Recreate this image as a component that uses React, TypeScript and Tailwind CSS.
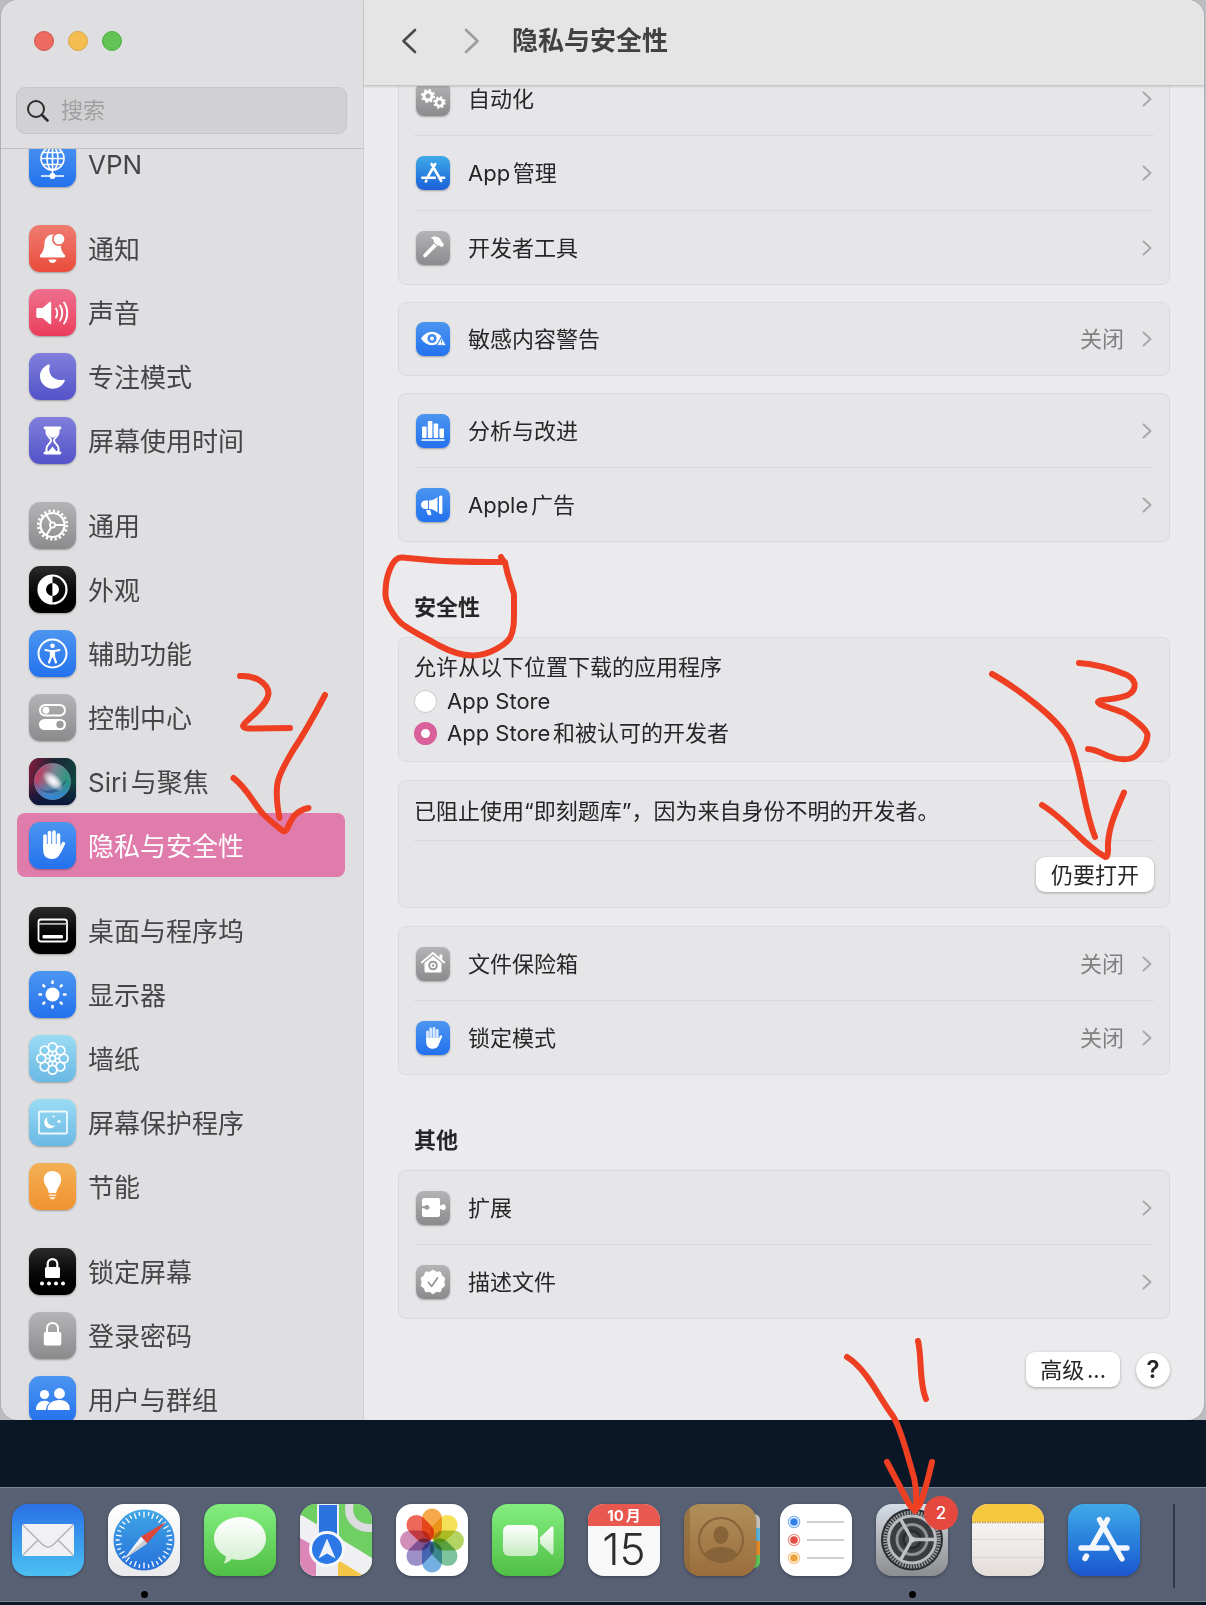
import type { ReactNode } from "react";

/* ---------- sidebar glyphs, drawn on a 47 x 47 tile ---------- */

const HandShape = () => (
  <g fill="none" stroke="#fff" strokeLinecap="round">
    <path d="M16 14v12M20.500 10.500v14M25 10v14M29.500 13v13" strokeWidth="3.600" />
    <path d="M34.500 21.500l-4 8" strokeWidth="3.400" />
    <path
      d="M14.200 22h17v4l3.200-1.500-3.500 7.500c-1.500 3.400-4.500 5-8.200 5-5.500 0-8.500-3.500-8.500-9z"
      fill="#fff"
      stroke="none"
    />
  </g>
);

const GearRing = () => (
  <g fill="none" stroke="#fff">
    <circle cx="23.500" cy="23" r="12" strokeWidth="2.200" />
    <circle cx="23.500" cy="23" r="14.300" strokeWidth="2.600" strokeDasharray="2.200 2.292" />
    <circle cx="23.500" cy="23" r="2.600" strokeWidth="1.800" />
    <path d="M26 23h9.500M22.200 20.800l-5-8.400M22.200 25.200l-5 8.400" strokeWidth="2" />
  </g>
);

const petals = [0, 45, 90, 135, 180, 225, 270, 315];

const glyphs: Record<string, ReactNode> = {
  vpn: (
    <g fill="none" stroke="#fff" strokeWidth="1.600">
      <circle cx="23.500" cy="18.500" r="11.500" />
      <ellipse cx="23.500" cy="18.500" rx="5.500" ry="11.500" />
      <path d="M12 18.500h23M23.500 7v28M14 12.500h19M14 24.500h19M12 36h23" />
      <circle cx="23.500" cy="36" r="3" fill="#fff" stroke="none" />
    </g>
  ),
  bell: (
    <g fill="#fff">
      <path d="M23.500 9.500c-5 0-7.700 4-8 9-.4 6-1.600 8.500-4.300 11.500-.9 1-.4 2.500 1 2.500h22.600c1.400 0 1.900-1.500 1-2.500-2.700-3-3.900-5.500-4.300-11.500-.3-5-3-9-8-9z" />
      <path d="M19.500 34.500h8c-.6 2.400-2 3.500-4 3.500s-3.400-1.100-4-3.500z" />
      <circle cx="30" cy="14" r="6.200" stroke="#ec6f64" strokeWidth="1.800" />
    </g>
  ),
  sound: (
    <g fill="none" stroke="#fff" strokeWidth="2" strokeLinecap="round">
      <path
        d="M9 19h4.500l7-6c.8-.7 1.700-.3 1.700.8v20.400c0 1.100-.9 1.500-1.700.8l-7-6H9c-1 0-1.700-.7-1.700-1.700v-6.600c0-1 .7-1.700 1.700-1.700z"
        fill="#fff"
        stroke="none"
      />
      <path d="M27 19.500c1.600 2.500 1.600 6.500 0 9M31 16.500c3 4 3 11 0 15M35 13.500c4.200 5.500 4.200 15.500 0 21" />
    </g>
  ),
  moon: (
    <path
      d="M19.500 11.600c.8-.4 1.600.3 1.300 1.100-2.600 8.300 4.200 16 13.800 14 .9-.2 1.600.6 1.200 1.400-2 4.500-6.600 7.600-11.800 7.600-7.200 0-13-5.700-13-12.700 0-4.900 3.400-9.500 8.500-11.400z"
      fill="#fff"
    />
  ),
  hourglass: (
    <g fill="none" stroke="#fff" strokeWidth="2" strokeLinejoin="round">
      <path d="M16 11h15M16 36h15" strokeWidth="2.800" strokeLinecap="round" />
      <path d="M17.500 12v3.500c0 4 4.500 5 4.500 8s-4.500 4-4.500 8V35h12v-3.500c0-4-4.500-5-4.500-8s4.500-4 4.500-8V12z" />
      <path d="M17.500 12h12v4l-4.500 4.500h-3L17.500 16zM19 35l4.500-5.500L28 35z" fill="#fff" stroke="none" />
    </g>
  ),
  gear: <GearRing />,
  appearance: (
    <g>
      <circle cx="23.500" cy="23.500" r="14" fill="none" stroke="#fff" strokeWidth="2.200" />
      <path d="M23.500 9.500a14 14 0 0 0 0 28z" fill="#fff" />
      <path d="M23.500 17a6.500 6.500 0 0 0 0 13z" fill="#000" />
      <path d="M23.500 17a6.500 6.500 0 0 1 0 13z" fill="#fff" />
    </g>
  ),
  accessibility: (
    <g fill="none" stroke="#fff" strokeLinecap="round" strokeLinejoin="round">
      <circle cx="23.500" cy="23.500" r="14" strokeWidth="2" />
      <circle cx="23.500" cy="15.800" r="2.300" fill="#fff" stroke="none" />
      <path d="M16.500 20l5 1h4l5-1" strokeWidth="2" />
      <path d="M22 21h3v6l2 5.500M22 21v6l-2 5.500" strokeWidth="2.200" />
      <path d="M22 21h3v6h-3z" fill="#fff" strokeWidth="1" />
    </g>
  ),
  controls: (
    <g>
      <rect x="11" y="11" width="25" height="10.500" rx="5.250" fill="none" stroke="#fff" strokeWidth="2" />
      <circle cx="17" cy="16.250" r="3.400" fill="#fff" />
      <rect x="10" y="25" width="27" height="11" rx="5.500" fill="#fff" />
      <circle cx="31" cy="30.500" r="3.700" fill="#9b9b9d" />
    </g>
  ),
  siri: (
    <g>
      <defs>
        <linearGradient id="siriBg" x1="0" y1="0" x2="1" y2=".3">
          <stop offset="0" stopColor="#8a1a3e" />
          <stop offset=".5" stopColor="#1d2433" />
          <stop offset="1" stopColor="#0f4440" />
        </linearGradient>
        <linearGradient id="siriLow" x1="0" y1="0" x2="0" y2="1">
          <stop offset=".5" stopColor="#101430" stopOpacity="0" />
          <stop offset="1" stopColor="#0a1540" />
        </linearGradient>
        <linearGradient id="siriOrb" x1="0" y1=".2" x2="1" y2=".5">
          <stop offset="0" stopColor="#ee2f62" />
          <stop offset=".5" stopColor="#8f9aa8" />
          <stop offset="1" stopColor="#1fb08c" />
        </linearGradient>
        <linearGradient id="siriBlue" x1="0" y1="0" x2="0" y2="1">
          <stop offset=".5" stopColor="#3c7fd0" stopOpacity="0" />
          <stop offset="1" stopColor="#2f86dc" />
        </linearGradient>
        <radialGradient id="siriCore">
          <stop offset="0" stopColor="#fff" />
          <stop offset=".4" stopColor="#f3eef8" stopOpacity=".85" />
          <stop offset="1" stopColor="#fff" stopOpacity="0" />
        </radialGradient>
      </defs>
      <rect width="47" height="47" fill="url(#siriBg)" />
      <rect width="47" height="47" fill="url(#siriLow)" />
      <circle cx="23.500" cy="23.500" r="18" fill="url(#siriOrb)" fillOpacity=".8" stroke="#8f8fb8" strokeOpacity=".6" />
      <circle cx="23.500" cy="23.500" r="18" fill="url(#siriBlue)" />
      <path d="M9 29c6 6 17 5 29-8-5 15-20 19-29 8z" fill="#1f3f78" fillOpacity=".5" />
      <ellipse cx="24" cy="23" rx="13" ry="7" fill="url(#siriCore)" transform="rotate(42 24 23)" />
    </g>
  ),
  hand: <HandShape />,
  dock: (
    <g fill="none" stroke="#fff" strokeWidth="1.800">
      <rect x="9.500" y="12.500" width="28.500" height="22" rx="2.500" />
      <path d="M10 16.800h27.500" stroke="#bbb" />
      <rect x="13.500" y="28" width="20.500" height="3.500" rx="1" fill="#fff" stroke="none" />
    </g>
  ),
  sun: (
    <g stroke="#fff" strokeWidth="2.600" strokeLinecap="round">
      <circle cx="23.500" cy="23.500" r="7" fill="#fff" stroke="none" />
      <path d="M23.500 10.500v1.500M23.500 35v1.500M10.500 23.500H12M35 23.500h1.500M14.300 14.300l1 1M31.700 31.700l1 1M14.300 32.700l1-1M31.700 15.300l1-1" />
    </g>
  ),
  flower: (
    <g fill="none" stroke="#fff" strokeWidth="1.700">
      {petals.map((a) => (
        <circle key={a} cx="23.500" cy="12.300" r="4.400" transform={`rotate(${a} 23.500 23.500)`} />
      ))}
      {petals.map((a) => (
        <path key={a} d="M23.500 20.500v-3.500" transform={`rotate(${a} 23.500 23.500)`} />
      ))}
      <circle cx="23.500" cy="23.500" r="3" />
    </g>
  ),
  saver: (
    <g>
      <rect x="10" y="12.500" width="28" height="22" rx="1" fill="none" stroke="#fff" strokeOpacity=".85" strokeWidth="1.800" />
      <path d="M18.500 18c-2 5 2 9.500 7.500 8.500-1 2-3 2.700-5 2.700-3.200 0-5.700-2.400-5.700-5.500 0-2.500 1.200-4.500 3.200-5.700z" fill="#fff" />
      <circle cx="24.500" cy="17.500" r="1.100" fill="#fff" />
      <circle cx="30" cy="22.500" r="1.700" fill="#fff" fillOpacity=".8" />
    </g>
  ),
  bulb: (
    <g fill="#fff">
      <path d="M23.500 8c-5 0-8.700 3.500-8.700 8.500 0 5.500 4 7.500 4.700 12.500.1.600.5 1 1 1h6c.5 0 .9-.4 1-1 .7-5 4.700-7 4.700-12.500 0-5-3.700-8.500-8.700-8.500z" />
      <path d="M19.800 31.500h7.400v1.600h-7.400zM20.500 34h6c-.4 1.600-1.400 2.400-3 2.400s-2.600-.8-3-2.400z" fillOpacity=".75" />
    </g>
  ),
  lockDots: (
    <g fill="#fff">
      <path d="M18.700 20v-4c0-6.500 9.600-6.500 9.600 0v4" fill="none" stroke="#fff" strokeWidth="2.200" />
      <rect x="16" y="19" width="15" height="11" rx="1.500" />
      {[13, 20, 27, 34].map((x) => (
        <circle key={x} cx={x} cy="35.500" r="2" />
      ))}
    </g>
  ),
  lock: (
    <g fill="#fff">
      <path d="M18 21v-4.500c0-7.500 11-7.500 11 0V21" fill="none" stroke="#fff" strokeWidth="2" />
      <rect x="14.800" y="20" width="17.500" height="13.500" rx="1.800" />
    </g>
  ),
  users: (
    <g fill="#fff">
      <circle cx="15.500" cy="18.500" r="4.600" />
      <circle cx="30.500" cy="17.500" r="5.400" />
      <path d="M7 33c0-5 4-8.300 8.500-8.300 2 0 3.700.6 5 1.700-2 1.700-3.300 4-3.500 7.600H8.200c-.7 0-1.200-.4-1.200-1z" />
      <path d="M19.500 34c-.6 0-1-.4-1-1 0-5.200 5-9 12-9s10.300 4 10.300 9c0 .6-.4 1-1 1z" />
    </g>
  ),
};

type SideEntry = { label: string; icon: string; tile: string; selected?: boolean };

const BLUE = "bg-linear-to-b from-[#4c95f0] to-[#2371ee]";
const GREY = "bg-linear-to-b from-[#b4b4b6] to-[#8b8b8d]";
const INDIGO = "bg-linear-to-b from-[#807fdc] to-[#5452c8]";
const BLACK = "bg-linear-to-b from-[#2b2b2b] to-[#000000]";
const SKY = "bg-linear-to-b from-[#9bdcf4] to-[#69b8e4]";

const sideGroups: SideEntry[][] = [
  [{ label: "VPN", icon: "vpn", tile: BLUE }],
  [
    { label: "通知", icon: "bell", tile: "bg-linear-to-b from-[#ee7b70] to-[#ea4a3a]" },
    { label: "声音", icon: "sound", tile: "bg-linear-to-b from-[#ee6f8d] to-[#ea3c5c]" },
    { label: "专注模式", icon: "moon", tile: INDIGO },
    { label: "屏幕使用时间", icon: "hourglass", tile: INDIGO },
  ],
  [
    { label: "通用", icon: "gear", tile: GREY },
    { label: "外观", icon: "appearance", tile: BLACK },
    { label: "辅助功能", icon: "accessibility", tile: BLUE },
    { label: "控制中心", icon: "controls", tile: GREY },
    { label: "Siri与聚焦", icon: "siri", tile: BLACK },
    { label: "隐私与安全性", icon: "hand", tile: BLUE, selected: true },
  ],
  [
    { label: "桌面与程序坞", icon: "dock", tile: BLACK },
    { label: "显示器", icon: "sun", tile: BLUE },
    { label: "墙纸", icon: "flower", tile: SKY },
    { label: "屏幕保护程序", icon: "saver", tile: SKY },
    { label: "节能", icon: "bulb", tile: "bg-linear-to-b from-[#f3b054] to-[#f0922e]" },
  ],
  [
    { label: "锁定屏幕", icon: "lockDots", tile: BLACK },
    { label: "登录密码", icon: "lock", tile: GREY },
    { label: "用户与群组", icon: "users", tile: BLUE },
  ],
];

function SideItem({ label, icon, tile, selected }: SideEntry) {
  return (
    <li>
      <a
        href="#"
        aria-current={selected ? "page" : undefined}
        className={`flex h-16 items-center gap-3 rounded-lg pl-3 ${selected ? "bg-[#e07cab] text-white" : "text-[#454547]"}`}
      >
        <span className={`size-[47px] shrink-0 overflow-hidden rounded-[11px] shadow-[0_1px_2px_rgba(0,0,0,0.3)] ${tile}`}>
          <svg viewBox="0 0 47 47" className="size-full" aria-hidden="true">
            {glyphs[icon]}
          </svg>
        </span>
        <span className="pt-[3px] text-[26px] leading-7 whitespace-nowrap">{label}</span>
      </a>
    </li>
  );
}

function Sidebar() {
  return (
    <aside className="flex w-[363px] shrink-0 flex-col border-r border-[#d0d0d2] bg-[#dfdfe1]">
      <div className="border-b border-[#c2c2c4] pt-[31px] pr-4 pb-[14px] pl-[15px]">
        <div className="flex gap-[14px] pl-[18px]">
          <button aria-label="关闭窗口" className="size-5 rounded-full border border-[#c95a52] bg-[#ec6a5f]" />
          <button aria-label="最小化" className="size-5 rounded-full border border-[#d9a548] bg-[#f4bd50]" />
          <button aria-label="缩放" className="size-5 rounded-full border border-[#4fae45] bg-[#61c455]" />
        </div>
        <label className="mt-9 flex h-[47px] items-center gap-3 rounded-[9px] border border-[#c6c6c8] bg-[#d1d1d3] pl-[10px]">
          <svg viewBox="0 0 22 22" className="size-[22px] shrink-0" fill="none" stroke="#2d2d2f" strokeWidth="2" aria-hidden="true">
            <circle cx="9" cy="9" r="8" />
            <path d="M15 15l5.500 5.500" strokeWidth="2.600" strokeLinecap="round" />
          </svg>
          <input
            type="text"
            aria-label="搜索"
            placeholder="搜索"
            className="min-w-0 flex-1 bg-transparent text-[22px] text-[#333] outline-none placeholder:text-[#a0a0a2]"
          />
        </label>
      </div>
      <nav className="min-h-0 flex-1 overflow-y-auto pr-[18px] pl-4 [scrollbar-width:none]">
        <div className="-mt-[18px] flex flex-col gap-[21px]">
          {sideGroups.map((g) => (
            <ul key={g[0].label}>
              {g.map((e) => (
                <SideItem key={e.label} {...e} />
              ))}
            </ul>
          ))}
        </div>
      </nav>
    </aside>
  );
}

/* ---------- row glyphs, drawn on a 34 x 34 tile ---------- */

const AppStoreA = () => (
  <g stroke="#fff" strokeLinecap="round" fill="none">
    <path d="M19.200 8L12.300 20M15.600 8l9.600 17M6.300 21.700h12.500M23.800 21.700h4.400M9.800 25.500l.6-1" strokeWidth="2.600" />
  </g>
);

const rowGlyphs: Record<string, ReactNode> = {
  gears: (
    <g fill="none" stroke="#fff">
      <circle cx="12" cy="14" r="4" strokeWidth="3" />
      <circle cx="12" cy="14" r="6" strokeWidth="2" strokeDasharray="2.400 2.312" />
      <circle cx="23.500" cy="20.500" r="3.500" strokeWidth="2.600" />
      <circle cx="23.500" cy="20.500" r="5.300" strokeWidth="1.800" strokeDasharray="2.100 2.063" />
    </g>
  ),
  appstore: <AppStoreA />,
  hammer: (
    <g fill="#fff">
      <path d="M7.500 23.500L18 12.500l2.800 2.800L10 26c-1.600 1.400-3.800-.9-2.500-2.500z" />
      <path d="M15 6.800c4-2.300 7.500-1 9.500 1.500l1 2.200 2.200 2.500c.5.500.4 1-.1 1.400l-1.400 1.400c-.4.400-1 .4-1.400 0l-1.600-1.300-1.600.3-3.800-3.600c.6-2-.4-3.300-2.800-3.900z" />
    </g>
  ),
  eye: (
    <g>
      <path d="M5 16.500c3-4.500 6.700-6.800 11-6.800s8 2.300 11 6.800c-3 4.500-6.700 6.800-11 6.800s-8-2.300-11-6.800z" fill="#fff" />
      <circle cx="16" cy="16.500" r="4.600" fill="#3f8bf0" />
      <circle cx="16" cy="16.500" r="1.900" fill="#fff" />
      <path d="M25.500 15l5 8.700h-10z" fill="#fff" stroke="#3f8bf0" strokeWidth="1.200" strokeLinejoin="round" />
      <path d="M25.500 18v2.800M25.500 21.800v.8" stroke="#3f8bf0" strokeWidth="1" />
    </g>
  ),
  bars: (
    <g fill="#fff">
      <rect x="6" y="12.500" width="4.600" height="11.500" rx="1" />
      <rect x="11.800" y="7" width="4.600" height="17" rx="1" />
      <rect x="17.600" y="9.500" width="4.600" height="14.500" rx="1" />
      <rect x="23.400" y="14.500" width="4.600" height="9.500" rx="1" />
      <rect x="5.500" y="25.300" width="23" height="1.500" />
    </g>
  ),
  megaphone: (
    <g fill="#fff">
      <path d="M9.500 12.500H12V21H9.500c-2.500 0-4.500-1.800-4.500-4.200s2-4.300 4.500-4.300zM13 12.500c3.500-.2 6.500-1.500 8.500-3.500v15.500c-2-2-5-3.300-8.500-3.500z" />
      <rect x="23" y="7.500" width="3.400" height="18.500" rx="1.500" />
      <path d="M10 22h4l1.300 3.500c.4 1-.3 1.800-1.200 1.800h-1c-.8 0-1.300-.4-1.600-1.200z" />
    </g>
  ),
  house: (
    <g>
      <path d="M5.800 15.500L17 6l11.200 9.500" fill="none" stroke="#fff" strokeWidth="1.800" strokeLinecap="round" />
      <path d="M23.500 7.500h2.800V13l-2.800-2.400z" fill="#fff" />
      <path d="M8.500 16L17 9l8.500 7v8c0 1-.6 1.600-1.600 1.600H10.100c-1 0-1.600-.6-1.600-1.600z" fill="#fff" />
      <circle cx="17" cy="18.500" r="3.800" fill="none" stroke="#9a9a9c" strokeWidth="2" />
      <circle cx="17" cy="18.500" r="1.200" fill="#9a9a9c" />
    </g>
  ),
  hand: (
    <g fill="none" stroke="#fff" strokeLinecap="round">
      <path d="M11.500 11v8M14.700 8v10M18 7.500v10M21.200 9.500v10" strokeWidth="2.800" strokeOpacity=".8" />
      <path d="M25 15.500l-3 6" strokeWidth="2.400" />
      <path d="M10.200 17h12.400v2.500l2-1-2 5.500c-1.100 2.600-3 3.800-5.700 3.800-4.200 0-6.700-2.600-6.700-6.800z" fill="#fff" stroke="none" />
    </g>
  ),
  puzzle: (
    <g>
      <path d="M8 7h14c1.200 0 2 .8 2 2v5.500h1.200c.6-.8 1.300-1.200 2.100-1.200 1.500 0 2.500 1.200 2.500 2.900s-1 2.900-2.500 2.900c-.8 0-1.500-.4-2.100-1.200H24V24c0 1.200-.8 2-2 2H8c-1.200 0-2-.8-2-2V9c0-1.200.8-2 2-2z" fill="#fff" />
      <path d="M5.500 15.300h2.800c2-2.500 5.200-1.300 5.200 1s-3.200 3.500-5.200 1H5.500z" fill="#9c9c9e" />
    </g>
  ),
  seal: (
    <g>
      <path
        d="M17 5l3.500 2.300 4.200-.3 1.500 3.900 3.300 2.600-1.100 4 1.100 4-3.300 2.500-1.500 3.900-4.200-.3L17 30l-3.500-2.400-4.200.3-1.500-3.900-3.300-2.500 1.100-4-1.100-4 3.300-2.600L9.300 7l4.200.3z"
        fill="#fff"
        stroke="#fff"
        strokeLinejoin="round"
        transform="translate(.8 .3) scale(.95)"
      />
      <path d="M12.500 17.500l3.200 3.800 5.800-8.300" fill="none" stroke="#98989a" strokeWidth="1.800" strokeLinecap="round" strokeLinejoin="round" />
    </g>
  ),
};

const Chevron = () => (
  <svg viewBox="0 0 10 16" className="h-4 w-[10px] shrink-0" fill="none" stroke="#a9a9ab" strokeWidth="2" strokeLinecap="round" strokeLinejoin="round" aria-hidden="true">
    <path d="M1.500 1.500L8.500 8l-7 6.500" />
  </svg>
);

type RowData = { label: string; icon: string; tile: string; value?: string };

function Row({ label, icon, tile, value }: RowData) {
  return (
    <li className="h-[75px] border-t border-[#d9d9db] first:h-[73px] first:border-t-0 last:h-[74px] only:h-[72px]">
      <a href="#" className="flex h-full items-center gap-[18px] px-[2px]">
        <span className={`size-[34px] shrink-0 overflow-hidden rounded-lg shadow-[0_1px_2px_rgba(0,0,0,0.3)] ${tile}`}>
          <svg viewBox="0 0 34 34" className="size-full" aria-hidden="true">
            {rowGlyphs[icon]}
          </svg>
        </span>
        <span className="flex-1">{label}</span>
        {value && <span className="text-[#808082]">{value}</span>}
        <Chevron />
      </a>
    </li>
  );
}

function Card({ children }: { children: ReactNode }) {
  return <div className="rounded-lg border border-[#dadadc] bg-[#e6e6e8] px-[15px]">{children}</div>;
}

function RowCard({ rows }: { rows: RowData[] }) {
  return (
    <Card>
      <ul>
        {rows.map((r) => (
          <Row key={r.label} {...r} />
        ))}
      </ul>
    </Card>
  );
}

function Heading({ children }: { children: ReactNode }) {
  return <h2 className="h-[95px] px-4 pt-[50px] leading-[30px] font-bold">{children}</h2>;
}

function Content() {
  return (
    <main className="flex min-w-0 flex-1 flex-col bg-[#ebebed]">
      <header className="relative flex h-[86px] shrink-0 items-center border-b border-[#c6c6c8] bg-[#e5e5e6] pb-1 pl-[37px] shadow-[0_1px_2px_rgba(0,0,0,0.12)]">
        <button aria-label="后退">
          <svg viewBox="0 0 16 26" className="h-[26px] w-4" fill="none" stroke="#4a4a4c" strokeWidth="2.600" strokeLinecap="round" strokeLinejoin="round">
            <path d="M14 2L2.500 13 14 24" />
          </svg>
        </button>
        <button aria-label="前进" className="ml-[47px]">
          <svg viewBox="0 0 16 26" className="h-[26px] w-4" fill="none" stroke="#9d9d9f" strokeWidth="2.600" strokeLinecap="round" strokeLinejoin="round">
            <path d="M2 2l11.500 11L2 24" />
          </svg>
        </button>
        <h1 className="ml-8 text-[26px] leading-8 font-bold text-[#414143]">隐私与安全性</h1>
      </header>
      <div className="min-h-0 flex-1 overflow-y-auto px-[34px] text-[22px] leading-8 text-[#262628] [scrollbar-width:none]">
        <div className="-mt-[25px] flex flex-col gap-[17px]">
          <RowCard
            rows={[
              { label: "自动化", icon: "gears", tile: GREY },
              { label: "App管理", icon: "appstore", tile: "bg-linear-to-b from-[#3fa9e6] to-[#1f5fd8]" },
              { label: "开发者工具", icon: "hammer", tile: GREY },
            ]}
          />
          <RowCard rows={[{ label: "敏感内容警告", icon: "eye", tile: BLUE, value: "关闭" }]} />
          <RowCard
            rows={[
              { label: "分析与改进", icon: "bars", tile: BLUE },
              { label: "Apple广告", icon: "megaphone", tile: BLUE },
            ]}
          />
        </div>

        <Heading>安全性</Heading>
        <div className="flex flex-col gap-[18px]">
          <Card>
            <fieldset className="pt-[13px] pb-3">
              <legend className="float-left w-full">允许从以下位置下载的应用程序</legend>
              <label className="clear-both flex items-center gap-[10px] pt-[2px]">
                <input
                  type="radio"
                  name="source"
                  className="size-[23px] appearance-none rounded-full border border-[#c9c9cb] bg-white checked:border-[7px] checked:border-[#d9609a]"
                />
                App Store
              </label>
              <label className="flex items-center gap-[10px]">
                <input
                  type="radio"
                  name="source"
                  defaultChecked
                  className="size-[23px] appearance-none rounded-full border border-[#c9c9cb] bg-white checked:border-[7px] checked:border-[#d9609a]"
                />
                App Store和被认可的开发者
              </label>
            </fieldset>
          </Card>
          <Card>
            <p className="border-b border-[#d9d9db] pt-[14px] pb-[13px]">已阻止使用“即刻题库”，因为来自身份不明的开发者。</p>
            <div className="flex justify-end pt-4 pb-[15px]">
              <button className="h-[35px] rounded-[9px] bg-white px-[15px] shadow-[0_1px_3px_rgba(0,0,0,0.3)]">仍要打开</button>
            </div>
          </Card>
          <RowCard
            rows={[
              { label: "文件保险箱", icon: "house", tile: GREY, value: "关闭" },
              { label: "锁定模式", icon: "hand", tile: BLUE, value: "关闭" },
            ]}
          />
        </div>

        <Heading>其他</Heading>
        <RowCard
          rows={[
            { label: "扩展", icon: "puzzle", tile: GREY },
            { label: "描述文件", icon: "seal", tile: GREY },
          ]}
        />
        <div className="flex items-center justify-end gap-4 pt-[33px] pb-8">
          <button className="h-[35px] rounded-[9px] bg-white px-[14px] shadow-[0_1px_3px_rgba(0,0,0,0.3)]">高级...</button>
          <button aria-label="帮助" className="size-[34px] rounded-full bg-white text-[24px] font-semibold shadow-[0_1px_3px_rgba(0,0,0,0.3)]">
            ?
          </button>
        </div>
      </div>
    </main>
  );
}

/* ---------- dock icons, drawn on a 72 x 72 tile ---------- */

const ticks = Array.from({ length: 36 }, (_, i) => i * 10);

const Mail = () => (
  <>
    <path d="M12 20h48c1 0 2 1 2 2v28c0 1-1 2-2 2H12c-1 0-2-1-2-2V22c0-1 1-2 2-2z" fill="#f1f1f3" />
    <path d="M11 21l19 19c4 4 8 4 12 0l19-19M11 51l15-15M61 51L46 36" fill="none" stroke="#b1b3b8" strokeWidth="1.500" />
  </>
);

const Safari = () => (
  <>
    <defs>
      <linearGradient id="safariDial" x1="0" y1="0" x2="0" y2="1">
        <stop offset="0" stopColor="#3fa6e4" />
        <stop offset="1" stopColor="#2770dc" />
      </linearGradient>
    </defs>
    <circle cx="36" cy="36" r="30.500" fill="url(#safariDial)" />
    {ticks.map((a) => (
      <path key={a} d={a % 20 ? "M36 7.500v4" : "M36 7.500v6"} stroke="#fff" strokeWidth="1.300" transform={`rotate(${a} 36 36)`} />
    ))}
    <path d="M58 18L33 32.500l6 7z" fill="#e0453a" />
    <path d="M16 55l17-22.500 6 7z" fill="#f3f3f5" />
    <path d="M16 55l23-15.500-3-3.500z" fill="#c9ccd2" />
  </>
);

const Messages = () => (
  <>
    <defs>
      <linearGradient id="bubble" x1="0" y1="0" x2="0" y2="1">
        <stop offset="0" stopColor="#ffffff" />
        <stop offset="1" stopColor="#d3efcf" />
      </linearGradient>
    </defs>
    <path d="M36 13c14.500 0 26 9.500 26 21.500S50.500 56 36 56c-3 0-5.800-.4-8.400-1.100-2 2.300-5 4.300-8.300 4.600 1.600-1.800 2.700-4.500 2.600-7.100C14.500 48.500 10 42 10 34.500 10 22.500 21.500 13 36 13z" fill="url(#bubble)" />
  </>
);

const Maps = () => (
  <>
    <rect width="72" height="72" fill="#6fcf63" />
    <path d="M0 10l72 44v18H0z" fill="#f0eff1" />
    <path d="M0 34l16 9v29H0z" fill="#dc86b8" />
    <path d="M0 10l17 10V0H0z" fill="#6fcf63" />
    <path d="M38 56l26 16H38z" fill="#f2c546" />
    <path d="M17 40h21v32H17z" fill="#ececef" />
    <circle cx="68" cy="5" r="19" fill="none" stroke="#dcdbe0" strokeWidth="8" />
    <path d="M18 0h20v32H18z" fill="#2b74e0" stroke="#e9eefa" strokeWidth="2" />
    <circle cx="27" cy="45" r="16.500" fill="#2b78e6" stroke="#f6f8fc" strokeWidth="3" />
    <path d="M27 34.500l8.500 20L27 49.500l-8.500 5z" fill="#eef3fb" />
  </>
);

const petalColors = ["#f39a2b", "#f2dc3a", "#a6cd48", "#67b98c", "#5aa2dc", "#8b7cc0", "#c77bab", "#ea4d3c"];

const Photos = () => (
  <g className="mix-blend-multiply">
    {petalColors.map((c, i) => (
      <rect key={c} x="26" y="4.500" width="20" height="31" rx="10" fill={c} fillOpacity=".85" className="mix-blend-multiply" transform={`rotate(${i * 45} 36 36.500)`} />
    ))}
  </g>
);

const FaceTime = () => (
  <>
    <defs>
      <linearGradient id="cam" x1="0" y1="0" x2="0" y2="1">
        <stop offset="0" stopColor="#ffffff" />
        <stop offset="1" stopColor="#c4ebc0" />
      </linearGradient>
    </defs>
    <rect x="11" y="21" width="35" height="31" rx="6" fill="url(#cam)" />
    <path d="M48 33.500l11-10.500c1.200-1 2.500-.5 2.500 1v25c0 1.500-1.300 2-2.500 1l-11-10.500z" fill="url(#cam)" />
  </>
);

const Contacts = () => (
  <>
    <path d="M0 0h6v72H0z" fill="#8c673b" fillOpacity=".6" />
    <circle cx="37" cy="36" r="22" fill="none" stroke="#866338" strokeWidth="2" />
    <ellipse cx="37" cy="31" rx="7.500" ry="9" fill="#866338" />
    <path d="M20.500 50c3-4.500 9-7 16.500-7s13.500 2.500 16.500 7c-4 5-10 8-16.500 8s-12.500-3-16.500-8z" fill="#866338" />
  </>
);

const Reminders = () => (
  <>
    {[
      { y: 18, c: "#2f80ea" },
      { y: 36, c: "#e34c42" },
      { y: 54, c: "#f0a23a" },
    ].map(({ y, c }) => (
      <g key={y}>
        <circle cx="14" cy={y} r="5.600" fill="none" stroke={c} strokeOpacity=".6" strokeWidth="1.300" />
        <circle cx="14" cy={y} r="3.800" fill={c} />
        <path d={`M27 ${y}h37`} stroke="#cfcfd1" strokeWidth="1.800" />
      </g>
    ))}
  </>
);

const Settings = () => (
  <>
    <circle cx="36" cy="35.500" r="31" fill="#2c2d30" />
    <circle cx="36" cy="35.500" r="27" fill="none" stroke="#9ea0a3" strokeWidth="4" strokeDasharray="1.600 1.227" />
    <circle cx="36" cy="35.500" r="23.500" fill="#3b3c40" stroke="#b8babd" strokeWidth="3" />
    <circle cx="36" cy="35.500" r="15" fill="none" stroke="#8f9194" strokeWidth="3" />
    <circle cx="36" cy="35.500" r="8.500" fill="#4b4c50" stroke="#2a2b2e" strokeWidth="3" />
    <path d="M36 35.500h24M36 35.500L24.500 15M36 35.500L24.500 56" stroke="#bfc1c4" strokeWidth="3.400" />
    <circle cx="36" cy="35.500" r="3" fill="#c6c8cb" />
  </>
);

const Notes = () => (
  <>
    <rect width="72" height="18" fill="#f5c83f" />
    <path d="M0 18.500h72" stroke="#b59b55" strokeWidth="1.500" strokeDasharray="1.500 1" />
    <path d="M0 35.500h72M0 53.500h72" stroke="#d9d7d4" strokeWidth="1.200" />
  </>
);

const AppStore = () => (
  <g stroke="#f3f7fd" strokeWidth="5.400" strokeLinecap="round">
    <path d="M39.500 15.500L24.500 42M31.500 15.500L54 55M13 44h26M50 44h9M17 54.500l1.500-2.500" />
  </g>
);

const art = (node: ReactNode) => (
  <svg viewBox="0 0 72 72" className="size-full" aria-hidden="true">
    {node}
  </svg>
);

const WHITE = "bg-linear-to-b from-[#ffffff] to-[#e9e9eb]";
const GREEN = "bg-linear-to-b from-[#83ee7e] to-[#4fbf45]";

type DockApp = { name: string; tile: string; body: ReactNode; running?: boolean; badge?: string; tabs?: boolean };

const dockApps: DockApp[] = [
  { name: "邮件", tile: "bg-linear-to-b from-[#2c70e6] to-[#4dc0f2]", body: art(<Mail />) },
  { name: "Safari浏览器", tile: WHITE, body: art(<Safari />), running: true },
  { name: "信息", tile: GREEN, body: art(<Messages />) },
  { name: "地图", tile: WHITE, body: art(<Maps />) },
  { name: "照片", tile: "bg-white", body: art(<Photos />) },
  { name: "FaceTime通话", tile: GREEN, body: art(<FaceTime />) },
  {
    name: "日历",
    tile: "bg-[#f8f8f9]",
    body: (
      <span className="flex size-full flex-col items-center">
        <span className="flex h-[22px] w-full items-center justify-center bg-[#e8584e] text-[15px] leading-none font-bold text-white">10月</span>
        <span className="text-[44px] leading-[46px] font-light text-[#2c2c2e]">15</span>
      </span>
    ),
  },
  { name: "通讯录", tile: "bg-linear-to-b from-[#b08f5b] to-[#9a6d3c]", body: art(<Contacts />), tabs: true },
  { name: "提醒事项", tile: "bg-white", body: art(<Reminders />) },
  { name: "系统设置", tile: "bg-linear-to-b from-[#d5dde6] to-[#8c8d8e]", body: art(<Settings />), running: true, badge: "2" },
  { name: "备忘录", tile: "bg-linear-to-b from-[#fbfafa] to-[#e4deda]", body: art(<Notes />) },
  { name: "App Store", tile: "bg-linear-to-b from-[#41a9e8] to-[#1d55cf]", body: art(<AppStore />) },
];

function Dock() {
  return (
    <footer className="flex shrink-0 items-start gap-6 border-y border-[#7f8795] bg-[#586174] pt-4 pb-[3px] pl-3">
      {dockApps.map(({ name, tile, body, running, badge, tabs }) => (
        <button key={name} aria-label={name} className="relative flex shrink-0 flex-col items-center">
          {tabs && (
            <span className="absolute top-[10px] -right-1 flex h-[54px] w-4 flex-col overflow-hidden rounded-r-md">
              <span className="flex-1 bg-[#c9c5be]" />
              <span className="flex-1 bg-[#5cb4dd]" />
              <span className="flex-1 bg-[#e38c2c]" />
              <span className="flex-1 bg-[#5fc757]" />
            </span>
          )}
          <span className={`relative block size-[72px] overflow-hidden rounded-2xl shadow-[0_1px_3px_rgba(0,0,0,0.35)] ${tile}`}>{body}</span>
          {badge && (
            <span className="absolute -top-2 -right-[10px] flex size-[34px] items-center justify-center rounded-full bg-[#e4483f] text-[17px] leading-none font-medium text-white">
              {badge}
            </span>
          )}
          <span className={`mt-[15px] size-[7px] rounded-full ${running ? "bg-black" : "bg-transparent"}`} />
        </button>
      ))}
      <span className="ml-[9px] h-[84px] w-[2px] bg-[#2c374a]" />
    </footer>
  );
}

/* Hand-drawn step marks laid over the desktop */
function Marks() {
  return (
    <svg
      viewBox="0 0 1206 1605"
      className="pointer-events-none absolute top-0 left-0 h-[1605px] w-[1206px] max-w-none"
      fill="none"
      stroke="#ee3f23"
      strokeWidth="6"
      strokeLinecap="round"
      strokeLinejoin="round"
      aria-hidden="true"
    >
      <path d="M501 557l3 5C480 562 440 562 424 559.500L402 557.500C392 557 385 577 385.500 595C386 606 398 622 405 626C415 633 430 640 438 645C455 654 465 656 474 655.500C490 655 505 645 510 638C514 630 514 622 514 612V595C513 588 508 580 505 562" />
      <path d="M240 676C256 675 268 684 268.500 693C268.500 706 243 722 243 726Q244 728.500 248 728.500L290 728" />
      <path d="M325 695C312 720 300 740 292 752C284 766 277 778 277 788Q276 800 279.500 818" />
      <path d="M233.500 778C247 788 254 804 263 814C270 821 278 827 283 831Q285 832 287 829C292 818 295 811 308.500 808" />
      <path d="M1079 663C1095 664 1115 670 1127 675C1139 682 1135 691 1128 695C1117 700 1098 699 1098 702C1099 706 1116 709 1126 714C1137 721 1147 730 1147.500 735C1147 745 1141 751 1137 755C1131 761 1118 760 1108 756C1100 752 1094 749 1088 749" />
      <path d="M992 674C1012 685 1046 710 1060 727C1072 741 1074 754 1078 769C1084 793 1086 814 1095 837" />
      <path d="M1042 805C1062 817 1078 837 1090 846Q1098 853 1105.500 857Q1108 857 1108 850C1107 832 1114 815 1124 792.500" />
      <path d="M918 1341C922 1357 919 1383 926 1399" />
      <path d="M847 1357C868 1370 880 1400 893 1416C901 1429 907 1454 911 1467C916 1482 918 1497 915 1511" />
      <path d="M887 1462L909 1504Q915 1514 920 1504Q925 1492 932 1462" />
    </svg>
  );
}

export default function App() {
  return (
    <div
      lang="zh-CN"
      className="relative flex h-screen w-full flex-col overflow-hidden bg-linear-to-b from-[#060c14] to-[#0a1828] pb-[3px] font-[Inter,'Noto_Sans_CJK_SC',sans-serif] [text-autospace:normal]"
    >
      <div className="mb-[67px] flex min-h-0 flex-1 bg-[#bdbdc0] pr-[2px] pl-px">
        <div className="flex min-w-0 flex-1 overflow-hidden rounded-2xl shadow-[0_0_1px_rgba(0,0,0,0.6)]">
          <Sidebar />
          <Content />
        </div>
      </div>
      <Dock />
      <Marks />
    </div>
  );
}
